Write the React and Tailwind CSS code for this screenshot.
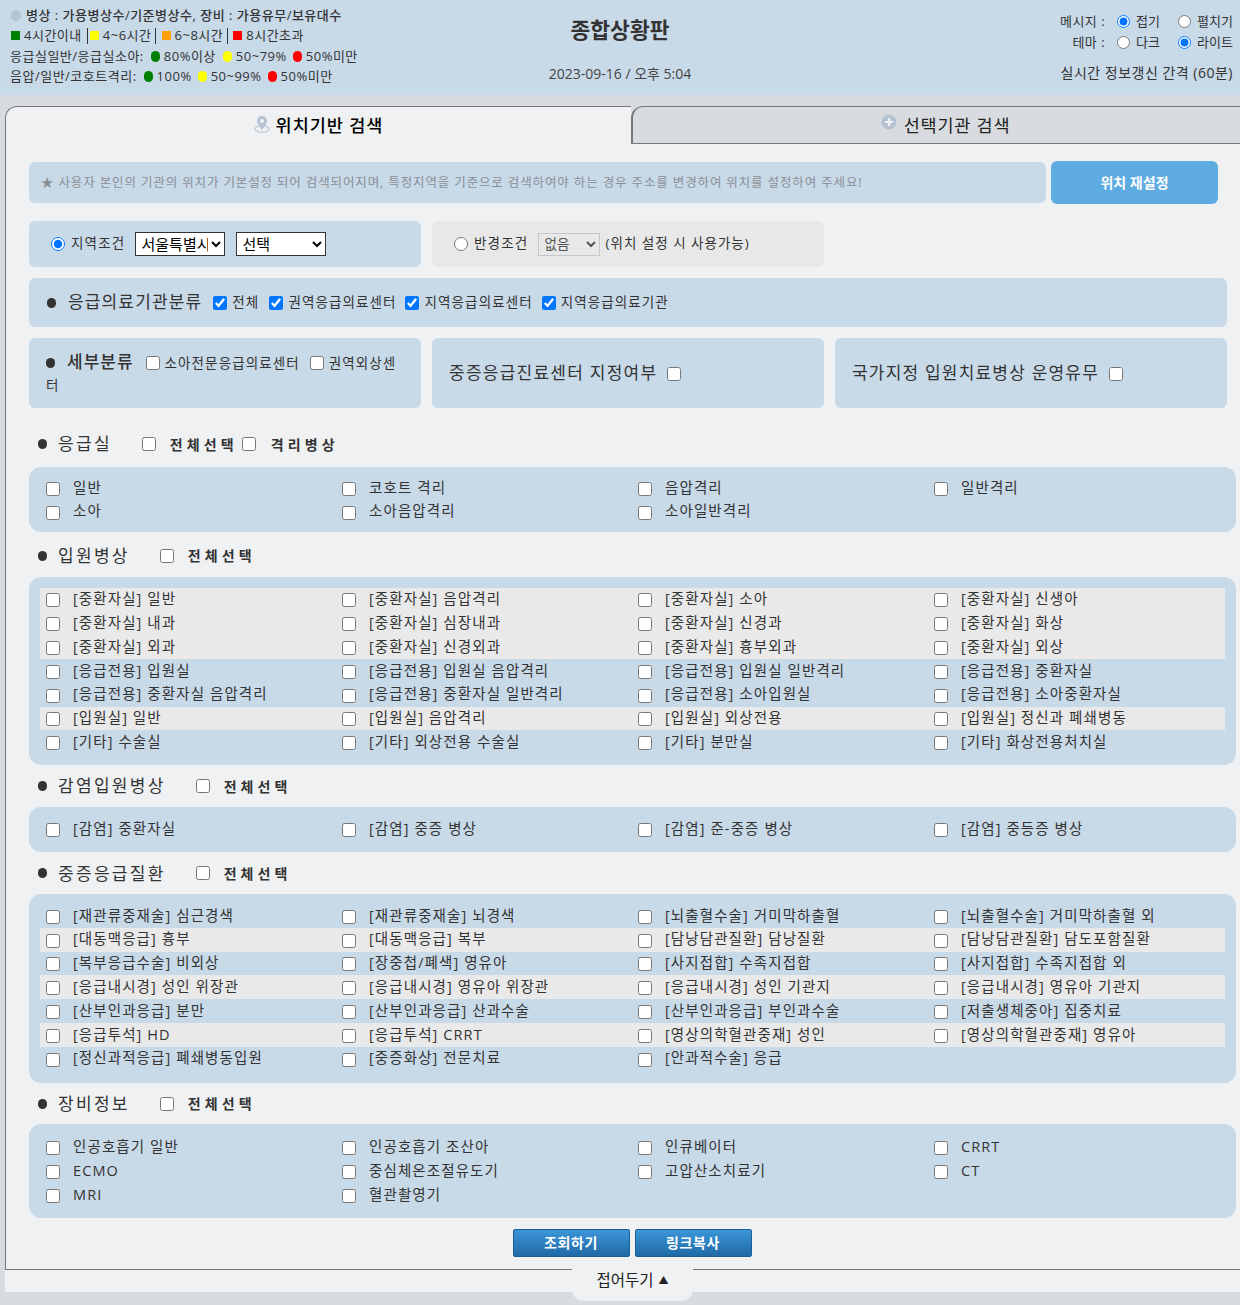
import React from "react";

const Cb = ({ checked, cls = "" }) => (
  <input type="checkbox" defaultChecked={checked} className={"m-0 w-[14px] h-[14px] shrink-0 " + cls} />
);
const Radio = ({ name, checked, big }) => (
  <input type="radio" name={name} defaultChecked={checked} className={"m-0 shrink-0 " + (big ? "w-[14px] h-[14px]" : "w-[13px] h-[13px]")} />
);
const Dot = ({ c }) => <span className="inline-block w-[9px] h-[11px] rounded-full mr-[4px]" style={{ background: c }} />;
const Sq = ({ c }) => <span className="inline-block w-[9px] h-[9px] mr-[4px]" style={{ background: c }} />;
const Bullet = () => <span className="inline-block w-[9px] h-[10px] rounded-full bg-[#333333] shrink-0" />;

function Grid({ rows, grey = [], pad = "pt-[10px] pb-[12px]" }) {
  return (
    <div className={"bg-[#c8d9e8] rounded-[12px] px-[11px] w-[1207px] " + pad}>
      {rows.map((r, i) => (
        <div key={i} className={"grid grid-cols-[repeat(4,296px)] w-[1185px] h-[23.8px] items-center " + (grey.includes(i) ? "bg-[#e9e9e9]" : "")}>
          {[0, 1, 2, 3].map((j) =>
            r[j] ? (
              <label key={j} className="flex items-center pl-[6px]">
                <Cb cls="translate-y-[1px]" />
                <span className="ml-[13px] text-[14.5px] tracking-[1.1px] text-[#333333] leading-none">{r[j]}</span>
              </label>
            ) : (
              <span key={j} />
            )
          )}
        </div>
      ))}
    </div>
  );
}

function Head({ title, h, items }) {
  return (
    <div className={"flex items-center pl-[9px] " + h}>
      <Bullet />
      <span className="ml-[11px] text-[17px] tracking-[2.3px] text-[#333333]">{title}</span>
      <Cb cls="ml-[30px]" />
      <span className="ml-[14px] text-[14px] font-semibold tracking-[4.1px] text-[#333333]">전체선택</span>
      {items && (
        <>
          <Cb cls="ml-[4px]" />
          <span className="ml-[15px] text-[14px] font-semibold tracking-[4.1px] text-[#333333]">{items}</span>
        </>
      )}
    </div>
  );
}

export default function App() {
  return (
    <div className="w-[1240px] h-[1305px] bg-[#d8dce0] overflow-hidden relative text-[#333333] font-['Open_Sans','Noto_Sans_CJK_KR',sans-serif]">
      <header className="h-[95px] bg-[#c8d9e8] flex">
        <div className="w-[500px] pl-[11px] pt-[5px] text-[13px] tracking-[0.5px] leading-[20.4px] text-[#333333] shrink-0">
          <div className="flex items-center font-medium">
            <span className="inline-block w-[10px] h-[11px] rounded-full bg-[#b4c2d2] mr-[5px]" />
            병상 : 가용병상수/기준병상수, 장비 : 가용유무/보유대수
          </div>
          <div className="flex items-center">
            <Sq c="#008000" />4시간이내
            <span className="h-[16px] border-l border-[#333] ml-[5px] mr-[2px]" />
            <Sq c="#ffff00" />4~6시간
            <span className="h-[16px] border-l border-[#333] ml-[3px] mr-[6px]" />
            <Sq c="#ff9f00" />6~8시간
            <span className="h-[16px] border-l border-[#333] ml-[4px] mr-[5px]" />
            <Sq c="#ff0000" />8시간초과
          </div>
          <div className="flex items-center -ml-[1px]">
            응급실일반/응급실소아:
            <span className="w-[7px]" /><Dot c="#008000" />80%이상
            <span className="w-[7px]" /><Dot c="#ffff00" />50~79%
            <span className="w-[6px]" /><Dot c="#ff0000" />50%미만
          </div>
          <div className="flex items-center -ml-[1px]">
            음압/일반/코호트격리:
            <span className="w-[7px]" /><Dot c="#008000" />100%
            <span className="w-[6px]" /><Dot c="#ffff00" />50~99%
            <span className="w-[6px]" /><Dot c="#ff0000" />50%미만
          </div>
        </div>
        <div className="w-[240px] text-center shrink-0">
          <div className="mt-[15px] text-[21.5px] leading-[30px] font-bold text-[#333333]">종합상황판</div>
          <div className="mt-[19px] text-[14px] leading-[20px] text-[#444444]">2023-09-16 / 오후 5:04</div>
        </div>
        <div className="flex-1 pt-[11px] pr-[7px] text-[13px] text-[#333333]">
          <div className="flex items-center justify-end h-[21px]">
            <span className="mr-[12px] tracking-[0.5px]">메시지 :</span>
            <Radio name="m" checked />
            <span className="ml-[6px] w-[42px]">접기</span>
            <Radio name="m" />
            <span className="ml-[6px]">펼치기</span>
          </div>
          <div className="flex items-center justify-end h-[21px]">
            <span className="mr-[12px] tracking-[0.5px]">테마 :</span>
            <Radio name="t" />
            <span className="ml-[6px] w-[42px]">다크</span>
            <Radio name="t" checked />
            <span className="ml-[6px]">라이트</span>
          </div>
          <div className="mt-[10px] text-right text-[14px] tracking-[0.5px] leading-[20px]">실시간 정보갱신 간격 (60분)</div>
        </div>
      </header>

      <div className="pl-[5px] pt-[11px]">
        <div className="flex h-[38px]">
          <div className="w-[626px] h-[38px] bg-[#eff1f3] border-l border-t border-[#777777] rounded-tl-[12px] flex items-center justify-center text-[17.5px] text-black font-medium">
            <svg width="16" height="18" viewBox="0 0 16 18" className="mr-[6px] -translate-y-[2px]">
              <ellipse cx="8" cy="14" rx="7" ry="3.2" fill="none" stroke="#c3cedb" strokeWidth="1.4" />
              <path d="M8 1a5 5 0 0 1 5 5c0 3.2-3.2 6-5 9-1.800-3-5-5.800-5-9a5 5 0 0 1 5-5z" fill="#b4c2d2" />
              <circle cx="8" cy="6" r="2" fill="#eff1f3" />
            </svg>
            <span className="tracking-[0.95px]">위치기반 검색</span>
          </div>
          <div className="flex-1 h-[38px] bg-[#d8dce0] border-l-2 border-t border-b border-[#777777] rounded-tl-[12px] flex items-center justify-center text-[17.5px] text-[#222222] pl-[18px]">
            <svg width="16" height="16" viewBox="0 0 16 16" className="mr-[7px] -translate-y-[3px]">
              <circle cx="8" cy="8" r="7.500" fill="#b4c2d2" />
              <path d="M8 4v8M4 8h8" stroke="#eff1f3" strokeWidth="2.200" />
            </svg>
            <span className="tracking-[0.8px]">선택기관 검색</span>
          </div>
        </div>

        <div className="bg-[#eff1f3] border-l border-b border-[#777777] h-[1126px] pl-[23px] pt-[17px]">
          <div className="flex gap-[5px]">
            <div className="w-[1017px] h-[41px] mt-[1px] bg-[#c8d9e8] rounded-[6px] flex items-center pl-[12px] pt-[2px] text-[12.5px] tracking-[0.87px] text-[#8a8f96]">
              ★ 사용자 본인의 기관의 위치가 기본설정 되어 검색되어지며, 특정지역을 기준으로 검색하여야 하는 경우 주소를 변경하여 위치를 설정하여 주세요!
            </div>
            <button className="w-[167px] h-[43px] bg-[#5dabe0] rounded-[6px] text-white text-[14px] font-bold">위치 재설정</button>
          </div>

          <div className="flex gap-[11px] mt-[17px]">
            <div className="w-[392px] h-[46px] bg-[#c8d9e8] rounded-[6px] flex items-center pl-[22px] text-[13.5px]">
              <Radio name="a" checked big />
              <span className="ml-[6px] -translate-y-[1px] tracking-[1.2px]">지역조건</span>
              <select className="ml-[10px] w-[90px] h-[24px] bg-white border border-[#333333] text-black text-[15px] pl-[1px]">
                <option>서울특별시</option>
              </select>
              <select className="ml-[11px] w-[90px] h-[24px] bg-white border border-[#333333] text-black text-[15px] pl-[1px]">
                <option>선택</option>
              </select>
            </div>
            <div className="w-[392px] h-[46px] bg-[#e8e8e8] rounded-[6px] flex items-center pl-[22px] text-[13.5px]">
              <Radio name="a" big />
              <span className="ml-[6px] -translate-y-[1px] tracking-[1.2px]">반경조건</span>
              <select disabled className="ml-[10px] w-[62px] h-[23px] bg-[#e8e8e8] border border-[#c4c8cc] text-[#555555] text-[13.5px] pl-[1px]">
                <option>없음</option>
              </select>
              <span className="ml-[5px] -translate-y-[1px] tracking-[1px]">(위치 설정 시 사용가능)</span>
            </div>
          </div>

          <div className="w-[1198px] h-[49px] mt-[11px] bg-[#c8d9e8] rounded-[6px] flex items-center pl-[18px] text-[13.5px] tracking-[1.1px]">
            <Bullet />
            <span className="ml-[12px] text-[17px] tracking-[1.15px] -translate-y-[1px]">응급의료기관분류</span>
            <Cb checked cls="ml-[11px]" />
            <span className="ml-[5px]">전체</span>
            <Cb checked cls="ml-[10px]" />
            <span className="ml-[5px]">권역응급의료센터</span>
            <Cb checked cls="ml-[8px]" />
            <span className="ml-[6px]">지역응급의료센터</span>
            <Cb checked cls="ml-[9px]" />
            <span className="ml-[5px]">지역응급의료기관</span>
          </div>

          <div className="flex gap-[11px] mt-[11px]">
            <div className="w-[392px] h-[70px] bg-[#c8d9e8] rounded-[6px] pl-[17px] pr-[20px] pt-[13px] text-[13.5px] tracking-[1.1px] leading-[22px]">
              <Bullet />
              <span className="ml-[12px] text-[17px] font-medium tracking-[1px]">세부분류</span>
              <Cb cls="ml-[12px] align-[-2px]" />
              <span className="ml-[5px]">소아전문응급의료센터</span>
              <Cb cls="ml-[10px] align-[-2px]" />
              <span className="ml-[5px]">권역외상센터</span>
            </div>
            <div className="w-[392px] h-[70px] bg-[#c8d9e8] rounded-[6px] flex items-center pl-[17px] text-[17px] tracking-[1.25px]">
              <span>중증응급진료센터 지정여부</span>
              <Cb cls="ml-[10px] translate-y-[1px]" />
            </div>
            <div className="w-[392px] h-[70px] bg-[#c8d9e8] rounded-[6px] flex items-center pl-[17px] text-[17px] tracking-[1.2px]">
              <span>국가지정 입원치료병상 운영유무</span>
              <Cb cls="ml-[10px] translate-y-[1px]" />
            </div>
          </div>

          <Head title="응급실" h="h-[59px] pt-[13px]" items="격리병상" />
          <Grid
            pad="pt-[9px] pb-[8px]"
            rows={[
              ["일반", "코호트 격리", "음압격리", "일반격리"],
              ["소아", "소아음압격리", "소아일반격리"],
            ]}
          />

          <Head title="입원병상" h="h-[45px] pt-[3px]" />
          <Grid
            grey={[0, 1, 2, 5]}
            pad="pt-[11px] pb-[11px]"
            rows={[
              ["[중환자실] 일반", "[중환자실] 음압격리", "[중환자실] 소아", "[중환자실] 신생아"],
              ["[중환자실] 내과", "[중환자실] 심장내과", "[중환자실] 신경과", "[중환자실] 화상"],
              ["[중환자실] 외과", "[중환자실] 신경외과", "[중환자실] 흉부외과", "[중환자실] 외상"],
              ["[응급전용] 입원실", "[응급전용] 입원실 음압격리", "[응급전용] 입원실 일반격리", "[응급전용] 중환자실"],
              ["[응급전용] 중환자실 음압격리", "[응급전용] 중환자실 일반격리", "[응급전용] 소아입원실", "[응급전용] 소아중환자실"],
              ["[입원실] 일반", "[입원실] 음압격리", "[입원실] 외상전용", "[입원실] 정신과 폐쇄병동"],
              ["[기타] 수술실", "[기타] 외상전용 수술실", "[기타] 분만실", "[기타] 화상전용처치실"],
            ]}
          />

          <Head title="감염입원병상" h="h-[42px]" />
          <Grid
            pad="pt-[10px] pb-[11px]"
            rows={[["[감염] 중환자실", "[감염] 중증 병상", "[감염] 준-중증 병상", "[감염] 중등증 병상"]]}
          />

          <Head title="중증응급질환" h="h-[42px] pt-[1px]" />
          <Grid
            grey={[1, 3, 5]}
            rows={[
              ["[재관류중재술] 심근경색", "[재관류중재술] 뇌경색", "[뇌출혈수술] 거미막하출혈", "[뇌출혈수술] 거미막하출혈 외"],
              ["[대동맥응급] 흉부", "[대동맥응급] 복부", "[담낭담관질환] 담낭질환", "[담낭담관질환] 담도포함질환"],
              ["[복부응급수술] 비외상", "[장중첩/폐색] 영유아", "[사지접합] 수족지접합", "[사지접합] 수족지접합 외"],
              ["[응급내시경] 성인 위장관", "[응급내시경] 영유아 위장관", "[응급내시경] 성인 기관지", "[응급내시경] 영유아 기관지"],
              ["[산부인과응급] 분만", "[산부인과응급] 산과수술", "[산부인과응급] 부인과수술", "[저출생체중아] 집중치료"],
              ["[응급투석] HD", "[응급투석] CRRT", "[영상의학혈관중재] 성인", "[영상의학혈관중재] 영유아"],
              ["[정신과적응급] 폐쇄병동입원", "[중증화상] 전문치료", "[안과적수술] 응급"],
            ]}
          />

          <Head title="장비정보" h="h-[41px] pt-[1px]" />
          <Grid
            pad="pt-[12px] pb-[11px]"
            rows={[
              ["인공호흡기 일반", "인공호흡기 조산아", "인큐베이터", "CRRT"],
              ["ECMO", "중심체온조절유도기", "고압산소치료기", "CT"],
              ["MRI", "혈관촬영기"],
            ]}
          />

          <div className="flex justify-center gap-[5px] mt-[11px] w-[1206px]">
            <button className="w-[117px] h-[28px] rounded-[2px] border border-[#1c5f94] bg-gradient-to-b from-[#3c96d8] to-[#1f6aa6] text-white text-[14px] font-bold tracking-[0.6px]">조회하기</button>
            <button className="w-[117px] h-[28px] rounded-[2px] border border-[#1c5f94] bg-gradient-to-b from-[#3c96d8] to-[#1f6aa6] text-white text-[14px] font-bold tracking-[0.6px]">링크복사</button>
          </div>
        </div>
        <div className="h-[22px] bg-[#eff1f3]" />
      </div>

      <div className="absolute left-[572px] top-[1264px] w-[121px] h-[37px] bg-[#eff1f3] rounded-b-[12px] flex items-center justify-center text-[15.5px] text-[#222222] pb-[4px]">
        접어두기 <span className="ml-[5px] text-[10px]">▲</span>
      </div>
    </div>
  );
}
